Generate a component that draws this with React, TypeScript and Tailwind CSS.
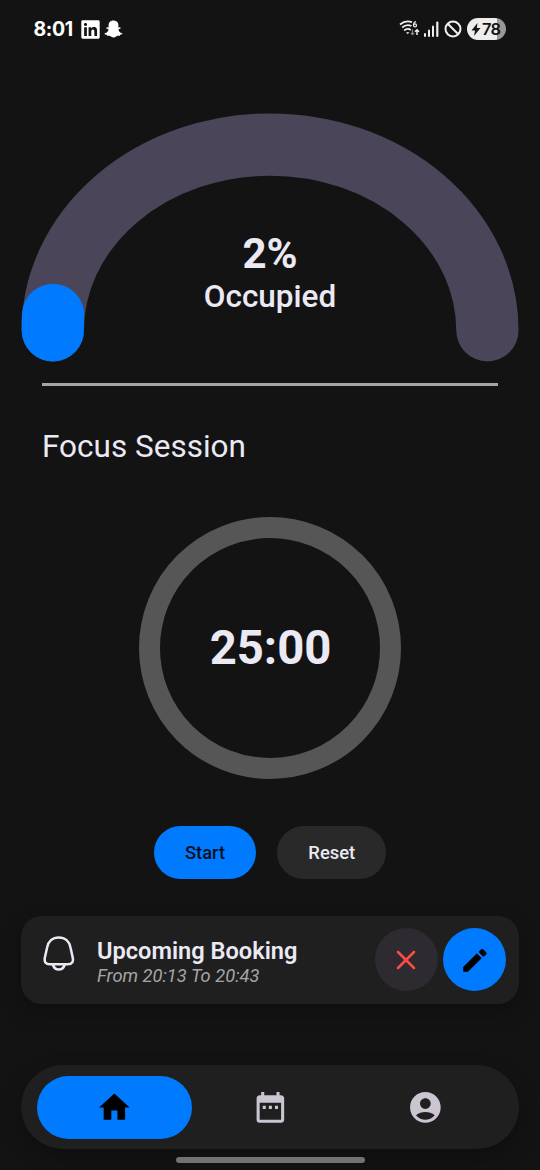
import React from "react";
import { FaLinkedin, FaSnapchatGhost } from "react-icons/fa";
import { MdAccountCircle, MdDateRange, MdHome } from "react-icons/md";

function StatusBar() {
  return (
    <header className="flex h-[58px] shrink-0 items-center justify-between pr-[34px] pl-[33.500px]">
      <div className="flex items-center">
        <span className="w-[47.500px] font-['Inter',sans-serif] text-[19.500px] leading-6 font-bold tracking-[-0.4px] text-white">
          8:01
        </span>
        <FaLinkedin className="h-[21px] w-[19px] text-white" />
        <FaSnapchatGhost className="ml-[4px] h-[18px] w-[19px] text-white" />
      </div>
      <div className="flex items-center">
        <svg width="22" height="20" viewBox="0 0 22 20" fill="none" stroke="#eee" strokeWidth="1.8">
          <path d="M1 5.5Q6.500 0.8 13 3.200M3.200 8.500Q7.500 4.800 12.500 7M5.200 11.500Q8.500 8.500 11.800 11" />
          <path d="M7 13.300l1.700 1.900 1.700-1.900z" fill="#eee" stroke="none" />
          <path d="M17 2.500q-2.500.8-2.500 3.600" strokeWidth="1.300" />
          <circle cx="16" cy="6.400" r="1.500" strokeWidth="1.300" />
          <path d="M13.500 10.500v5M11.800 13.800l1.700 1.800 1.700-1.800" stroke="#888" strokeWidth="1.200" />
          <path d="M18 16v-5M16 12.700l2-2 2 2" strokeWidth="1.500" />
        </svg>
        <svg className="ml-[3px]" width="15" height="16" viewBox="0 0 15 16" fill="#eee">
          <rect x="0" y="12" width="2" height="4" rx="1" />
          <rect x="4" y="8.500" width="2" height="7.500" rx="1" />
          <rect x="8" y="4.500" width="2" height="11.500" rx="1" />
          <rect x="12.200" y="0.500" width="2.200" height="15.500" rx="1" />
        </svg>
        <svg className="ml-[4.500px]" width="18" height="18" viewBox="0 0 18 18" fill="none" stroke="#f0f0f0" strokeWidth="2">
          <circle cx="9" cy="9" r="7.500" />
          <path d="M3.700 3.700l10.600 10.600" />
        </svg>
        <div className="ml-[5.500px] flex h-[21.500px] w-[39px] items-center rounded-full bg-linear-to-r from-[#ededed] from-78% to-[#999] to-78% pl-[3.500px]">
          <svg width="10" height="13" viewBox="0 0 10 13" fill="#151515">
            <path d="M6.500 0L0.500 7.500H4L3 13L9.500 5H5.800z" />
          </svg>
          <span className="ml-[1.500px] font-['Inter',sans-serif] text-[16.500px] leading-5 font-semibold tracking-[-0.8px] text-[#151515]">
            78
          </span>
        </div>
      </div>
    </header>
  );
}

function OccupancyGauge() {
  return (
    <section className="relative h-[325px] shrink-0">
      <svg width="540" height="325" viewBox="0 58 540 325" fill="none" strokeLinecap="round" strokeWidth="62.300">
        <path d="M52.800 330.300A217.300 185.800 0 0 1 487.400 330.300" stroke="#4a4558" />
        <path d="M52.800 330.300A217.300 185.800 0 0 1 53.100 315" stroke="#007bff" />
      </svg>
      <div className="absolute inset-x-0 top-[171px] flex flex-col items-center text-[#ebe9f4]">
        <span className="text-[42px] leading-[50px] font-bold">2%</span>
        <span className="-mt-px text-[31.500px] leading-[37px] font-medium">Occupied</span>
      </div>
    </section>
  );
}

function FocusSession() {
  return (
    <section className="flex flex-col items-center">
      <div className="h-[3px] w-[456px] bg-[#a5a5a5]" />
      <h2 className="mt-[42px] w-[456px] text-[31.500px] leading-[38px] text-[#ebe9f4]">Focus Session</h2>
      <div className="mt-[50.500px] flex size-[262.500px] items-center justify-center rounded-full border-[21px] border-[#565657]">
        <span className="ml-px text-[47.250px] leading-[56px] font-bold text-[#ebe9f4]">25:00</span>
      </div>
      <div className="mt-[47px] flex gap-[21px] text-[18.400px] font-medium">
        <button className="h-[53px] w-[102.500px] rounded-full bg-[#007bff] text-[#07111f]">Start</button>
        <button className="h-[53px] w-[109px] rounded-full bg-[#292929] text-[#ebe9f4]">Reset</button>
      </div>
    </section>
  );
}

function BookingCard() {
  return (
    <section className="mx-[21px] mt-[36.500px] flex h-[88px] shrink-0 items-center rounded-[21px] bg-[#1f1f1f] pr-[13px] pl-[22px] shadow-[0_8px_20px_rgba(0,0,0,0.25)]">
      <svg className="-mt-[12px]" width="32" height="36" viewBox="0 0 32 36" fill="none" stroke="#ebe9f4" strokeWidth="2.500" strokeLinejoin="round">
        <path d="M15.800 1.500C9.500 1.500 5.200 5.500 4.100 11.500L1.900 21.500C1 25.800 2.600 28.300 6.800 28.300H24.800C29 28.300 30.600 25.800 29.700 21.500L27.500 11.500C26.400 5.500 22.100 1.500 15.800 1.500Z" />
        <path d="M9.800 28.500C12 35.300 19.600 35.300 21.800 28.500" />
      </svg>
      <div className="ml-[22px] flex grow flex-col pt-[5px]">
        <span className="text-[23.600px] leading-[27px] font-semibold text-[#ebe9f4]">Upcoming Booking</span>
        <span className="text-[18.300px] leading-[22px] text-[#a5a5a5] italic">From 20:13 To 20:43</span>
      </div>
      <div className="flex gap-[5.500px]">
        <button aria-label="Cancel booking" className="flex size-[63px] items-center justify-center rounded-full bg-[#2d2b30]">
          <svg width="20" height="20" viewBox="0 0 20 20" stroke="#ff4c46" strokeWidth="2.500" strokeLinecap="round">
            <path d="M2 2l16 16M18 2L2 18" />
          </svg>
        </button>
        <button aria-label="Edit booking" className="flex size-[63px] items-center justify-center rounded-full bg-[#007bff]">
          <svg width="26" height="26" viewBox="0 0 26 26" fill="#000" stroke="#000" strokeWidth="1.200" strokeLinejoin="round">
            <path d="M1.800 20.200V24.200H5.800L18.900 11.100L14.900 7.100Z" />
            <path d="M17.400 4.900L19.200 3.100Q20.200 2.100 21.200 3.100L23.500 5.400Q24.500 6.400 23.500 7.400L21.300 9Z" />
          </svg>
        </button>
      </div>
    </section>
  );
}

function BottomNav() {
  return (
    <nav className="mx-[21px] mt-[61.500px] grid h-[84px] shrink-0 grid-cols-3 items-center rounded-full bg-[#1f1f1f] px-[15.750px] shadow-[0_8px_20px_rgba(0,0,0,0.25)]">
      <div className="flex h-[63px] items-center justify-center rounded-full bg-[#007bff]">
        <MdHome className="size-[36.750px] text-black" />
      </div>
      <div className="flex justify-center">
        <MdDateRange className="size-[36.750px] text-[#cbc5d2]" />
      </div>
      <div className="flex justify-center">
        <MdAccountCircle className="size-[36.750px] text-[#cbc5d2]" />
      </div>
    </nav>
  );
}

export default function App() {
  return (
    <main className="flex h-[1170px] w-[540px] flex-col overflow-hidden bg-[#131313] font-['Roboto',sans-serif]">
      <StatusBar />
      <OccupancyGauge />
      <FocusSession />
      <BookingCard />
      <BottomNav />
      <div className="z-10 mx-auto mt-[8px] h-[5.500px] w-[189px] shrink-0 rounded-full bg-[#727272]" />
    </main>
  );
}
